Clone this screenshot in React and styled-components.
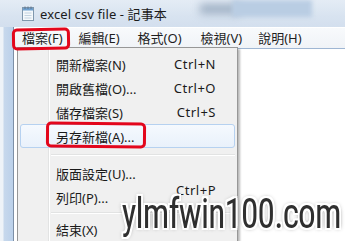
import React from "react";
import styled, { createGlobalStyle } from "styled-components";

const Global = createGlobalStyle`
  html, body { margin: 0; padding: 0; background: #fff; }
  body { width: 345px; height: 241px; overflow: hidden; }
`;

const UI = `"Noto Sans", "Noto Sans CJK TC", sans-serif`;

const Window = styled.div`
  position: relative;
  width: 345px;
  height: 241px;
  overflow: hidden;
  display: flex;
  flex-direction: column;
  background: #d6e2f0;
  font-family: ${UI};
`;

const TitleBar = styled.div`
  height: 27px;
  flex: none;
  display: flex;
  align-items: center;
  gap: 6px;
  padding-left: 22px;
  box-sizing: border-box;
  background: linear-gradient(180deg, #e4ecf5 0%, #d8e3f0 60%, #d3dfee 100%);
  position: relative;
`;

const Title = styled.span`
  font-size: 13px;
  color: #1b1b1b;
  letter-spacing: 0.1px;
`;

const Blur = styled.div`
  position: absolute;
  left: ${(p) => p.$x}px;
  top: ${(p) => p.$y}px;
  width: ${(p) => p.$w}px;
  height: ${(p) => p.$h}px;
  background: ${(p) => p.$c};
  filter: blur(${(p) => p.$b}px);
`;

const Body = styled.div`
  flex: 1;
  display: flex;
`;

const LeftFrame = styled.div`
  width: 13px;
  flex: none;
  background: linear-gradient(90deg, #eef3f8 0px, #eef3f8 3px, #c7d8ec 4px, #bcd1ea 12px);
  border-right: 1px solid #7d8fa6;
`;

const Client = styled.div`
  flex: 1;
  display: flex;
  flex-direction: column;
  background: #fff;
`;

const MenuBar = styled.div`
  height: 20px;
  flex: none;
  display: flex;
  align-items: center;
  padding-left: 4px;
  background: linear-gradient(180deg, #f8fafc 0%, #f0f3f7 100%);
  border-top: 1px solid #fff;
`;

const MenuItem = styled.span`
  font-size: 13px;
  color: #1e1e1e;
  padding: 0 4px;
  margin-right: ${(p) => p.$mr || 0}px;
  line-height: 20px;
`;

const Editor = styled.div`
  flex: 1;
  background: #fff;
  border-top: 1px solid #9fb6d3;
`;

const Dropdown = styled.div`
  position: absolute;
  left: 17px;
  top: 47px;
  width: 221px;
  height: 200px;
  box-sizing: border-box;
  border: 1px solid #979797;
  background:
    linear-gradient(90deg, transparent 30px, #e2e3e3 30px, #e2e3e3 31px, #fff 31px, #fff 32px, transparent 32px),
    #f0f0f0;
  box-shadow: 2px 2px 2px rgba(0, 0, 0, 0.28);
  padding: 4px 2px 0 2px;
  display: flex;
  flex-direction: column;
`;

const Row = styled.div`
  position: relative;
  height: 24px;
  flex: none;
  display: flex;
  align-items: center;
  justify-content: space-between;
  padding: 0 18px 0 35px;
  box-sizing: border-box;
  font-size: 13px;
  color: #1a1a1a;
  border-radius: 3px;
  border: 1px solid ${(p) => (p.$active ? "#b6d1f0" : "transparent")};
  background: ${(p) =>
    p.$active ? "linear-gradient(180deg, #f5f9fe 0%, #e9f1fb 100%)" : "transparent"};
`;

const Shortcut = styled.span`
  font-size: 13px;
  color: #1a1a1a;
  letter-spacing: 0.5px;
  position: relative;
  top: ${(p) => p.$dy || 0}px;
`;

const Separator = styled.div`
  height: ${(p) => p.$h}px;
  flex: none;
  display: flex;
  align-items: center;
  padding-left: 31px;
  &::after {
    content: "";
    flex: 1;
    height: 1px;
    background: #e2e3e3;
    border-bottom: 1px solid #fff;
  }
`;

const RedMark = styled.div`
  position: absolute;
  left: ${(p) => p.$x}px;
  top: ${(p) => p.$y}px;
  width: ${(p) => p.$w}px;
  height: ${(p) => p.$h}px;
  border: 3px solid #e3061c;
  border-radius: 5px;
  box-sizing: border-box;
  transform: rotate(${(p) => p.$r || 0}deg);
  pointer-events: none;
`;

const Watermark = styled.div`
  position: absolute;
  right: 4px;
  bottom: 6px;
  font-family: "Liberation Sans Narrow", "Roboto Condensed", "DejaVu Sans Condensed", "Liberation Sans", sans-serif;
  font-size: 42px;
  line-height: 42px;
  color: #2f2f2f;
  letter-spacing: -1px;
  transform: scaleX(0.84);
  transform-origin: right bottom;
  text-shadow:
    2px 0 0 #fff, -2px 0 0 #fff, 0 2px 0 #fff, 0 -2px 0 #fff,
    2px 2px 0 #fff, -2px -2px 0 #fff, 2px -2px 0 #fff, -2px 2px 0 #fff,
    0 0 4px #777, 0 0 6px #999;
`;

function NotepadIcon() {
  return (
    <svg width="12" height="15" viewBox="0 0 12 15">
      <rect x="0.5" y="1.5" width="11" height="13" fill="#f4f8fb" stroke="#7f97ad" />
      <rect x="1" y="2" width="10" height="2.5" fill="#6fa0cf" />
      <line x1="2.5" y1="7" x2="9.5" y2="7" stroke="#c2d2e0" />
      <line x1="2.5" y1="9.5" x2="9.5" y2="9.5" stroke="#c2d2e0" />
      <line x1="2.5" y1="12" x2="9.5" y2="12" stroke="#c2d2e0" />
      <line x1="3" y1="0.5" x2="3" y2="3" stroke="#60758a" />
      <line x1="6" y1="0.5" x2="6" y2="3" stroke="#60758a" />
      <line x1="9" y1="0.5" x2="9" y2="3" stroke="#60758a" />
    </svg>
  );
}

const items = [
  { label: "開新檔案(N)", sc: "Ctrl+N" },
  { label: "開啟舊檔(O)...", sc: "Ctrl+O" },
  { label: "儲存檔案(S)", sc: "Ctrl+S" },
  { label: "另存新檔(A)...", active: true },
  { sep: 13 },
  { label: "版面設定(U)..." },
  { label: "列印(P)...", sc: "Ctrl+P", dy: -7 },
  { sep: 8 },
  { label: "結束(X)" },
];

export default function App() {
  return (
    <>
      <Global />
      <Window>
        <TitleBar>
          <Blur $x={200} $y={4} $w={40} $h={10} $c="#9fb0c4" $b={4} />
          <Blur $x={232} $y={0} $w={80} $h={17} $c="#b9cde3" $b={2} />
          <NotepadIcon />
          <Title>excel csv file - 記事本</Title>
        </TitleBar>
        <Body>
          <LeftFrame />
          <Client>
            <MenuBar>
              <MenuItem $mr={8}>檔案(F)</MenuItem>
              <MenuItem $mr={10}>編輯(E)</MenuItem>
              <MenuItem $mr={11}>格式(O)</MenuItem>
              <MenuItem $mr={8}>檢視(V)</MenuItem>
              <MenuItem>說明(H)</MenuItem>
            </MenuBar>
            <Editor />
          </Client>
        </Body>
        <Dropdown>
          {items.map((it, i) =>
            it.sep ? (
              <Separator key={i} $h={it.sep} />
            ) : (
              <Row key={i} $active={it.active}>
                <span>{it.label}</span>
                {it.sc && <Shortcut $dy={it.dy}>{it.sc}</Shortcut>}
              </Row>
            )
          )}
        </Dropdown>
        <RedMark $x={12} $y={28} $w={58} $h={22} $r={-1} />
        <RedMark $x={46} $y={122} $w={100} $h={26} $r={0.5} />
        <Watermark>ylmfwin100.com</Watermark>
      </Window>
    </>
  );
}
